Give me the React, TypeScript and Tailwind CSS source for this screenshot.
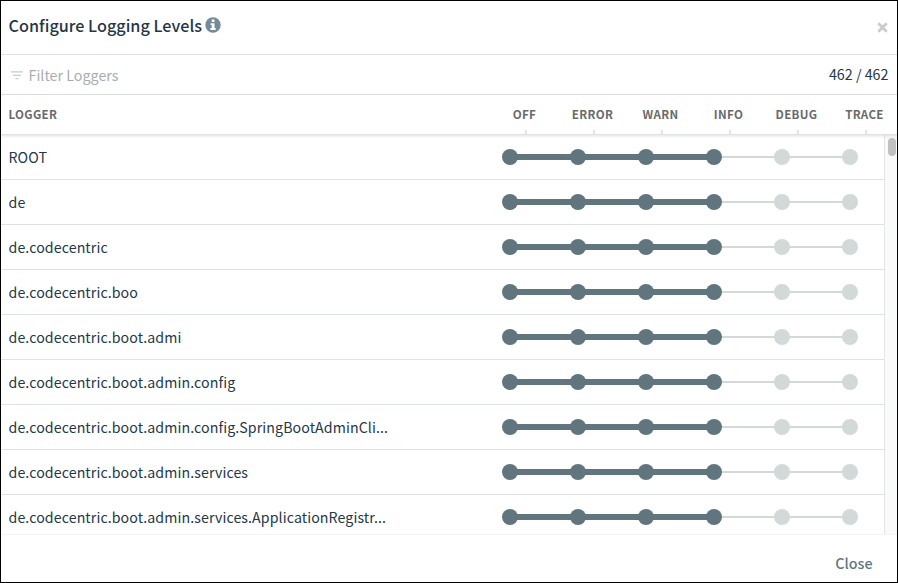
const LEVELS = ["OFF", "ERROR", "WARN", "INFO", "DEBUG", "TRACE"];

const LOGGERS = [
  "ROOT",
  "de",
  "de.codecentric",
  "de.codecentric.boo",
  "de.codecentric.boot.admi",
  "de.codecentric.boot.admin.config",
  "de.codecentric.boot.admin.config.SpringBootAdminCli...",
  "de.codecentric.boot.admin.services",
  "de.codecentric.boot.admin.services.ApplicationRegistr...",
];

const ACTIVE = 3;

function LevelSlider() {
  return (
    <div className="flex items-center">
      {LEVELS.map((level, i) => (
        <div key={level} className="flex items-center">
          {i > 0 && (
            <div className={i <= ACTIVE ? "-mx-px h-[6px] w-[54px] bg-[#61757e]" : "-mx-px h-[2px] w-[54px] bg-[#d3d9d9]"} />
          )}
          <div className={i <= ACTIVE ? "relative size-4 rounded-full bg-[#61757e]" : "size-4 rounded-full bg-[#d3d9d9]"} />
        </div>
      ))}
    </div>
  );
}

function LoggerRow({ name }: { name: string }) {
  return (
    <div className="flex h-[45px] shrink-0 items-center border-b border-[#dee3e6] pl-[7.5px]">
      <span className="w-[493.5px] truncate text-[14.2px] leading-5 tracking-[0.09px]">{name}</span>
      <LevelSlider />
    </div>
  );
}

export default function App() {
  return (
    <div className="flex h-[583px] w-[898px] flex-col overflow-hidden border border-black bg-white font-['Noto_Sans_CJK_SC',sans-serif] text-[#253746]">
      <header className="flex h-[54px] shrink-0 items-center border-b border-[#dfe2e3] pr-[9.5px] pl-[7.5px]">
        <h1 className="mb-[5px] text-[16.2px] leading-6 font-medium tracking-[0.02px]">Configure Logging Levels</h1>
        <svg className="mb-[5px] ml-[3px] size-4" viewBox="0 0 16 16">
          <circle cx="8" cy="8" r="7.7" fill="#748b98" />
          <path d="M6.7 2.6h2.8v2.3H6.7zM5.6 6.2h3.9v4.9h1.2v1.9H5.4v-1.9h1.3V8.1H5.6z" fill="#fff" />
        </svg>
        <svg className="ml-auto size-[11px]" viewBox="0 0 11 11">
          <path d="M1.3 1.3l8.4 8.4M9.7 1.3L1.3 9.7" stroke="#c8cccc" strokeWidth="2.7" />
        </svg>
      </header>

      <div className="flex h-10 shrink-0 items-center border-b border-[#dfe2e3] pr-[8.5px] pl-[10px]">
        <svg className="h-[10px] w-3" viewBox="0 0 12 10">
          <path d="M0 1.9h12M2 5.4h8M4.5 8.6h3" stroke="#c4ced3" strokeWidth="1.3" />
        </svg>
        <span className="ml-[5.5px] text-[14.3px] leading-5 text-[#a9adae]">Filter Loggers</span>
        <span className="mb-px ml-auto text-[14.3px] leading-5">462 / 462</span>
      </div>

      <div className="z-10 flex h-10 shrink-0 border-b border-[#dfe3e5] pl-[7.5px] text-[11.6px] leading-[38px] font-bold tracking-[0.3px] text-[#696b6b] shadow-[0_1px_3px_rgba(0,0,0,0.12)]">
        <span className="w-[483.5px] shrink-0">LOGGER</span>
        {LEVELS.map((level) => (
          <div key={level} className="flex w-[68px] shrink-0 flex-col items-center">
            <span className="-ml-[3px] h-[35px]">{level}</span>
            <span className="h-1 w-[2px] bg-[#dee3e5]" />
          </div>
        ))}
      </div>

      <div className="flex h-[400px] shrink-0 overflow-hidden border-b border-[#f3f4f4]">
        <div className="flex w-[883px] flex-col">
          {LOGGERS.map((name) => (
            <LoggerRow key={name} name={name} />
          ))}
        </div>
        <div className="w-[13px] border-l border-[#e4e6e6] bg-[#fafafa] pt-[3px] pl-[3px]">
          <div className="h-[18px] w-2 rounded-full bg-[#c1c1c1]" />
        </div>
      </div>

      <footer className="flex flex-1 items-center justify-end pt-[9px] pr-[24.5px]">
        <button className="text-[14.3px] leading-5 font-medium text-[#61757e]">Close</button>
      </footer>
    </div>
  );
}
